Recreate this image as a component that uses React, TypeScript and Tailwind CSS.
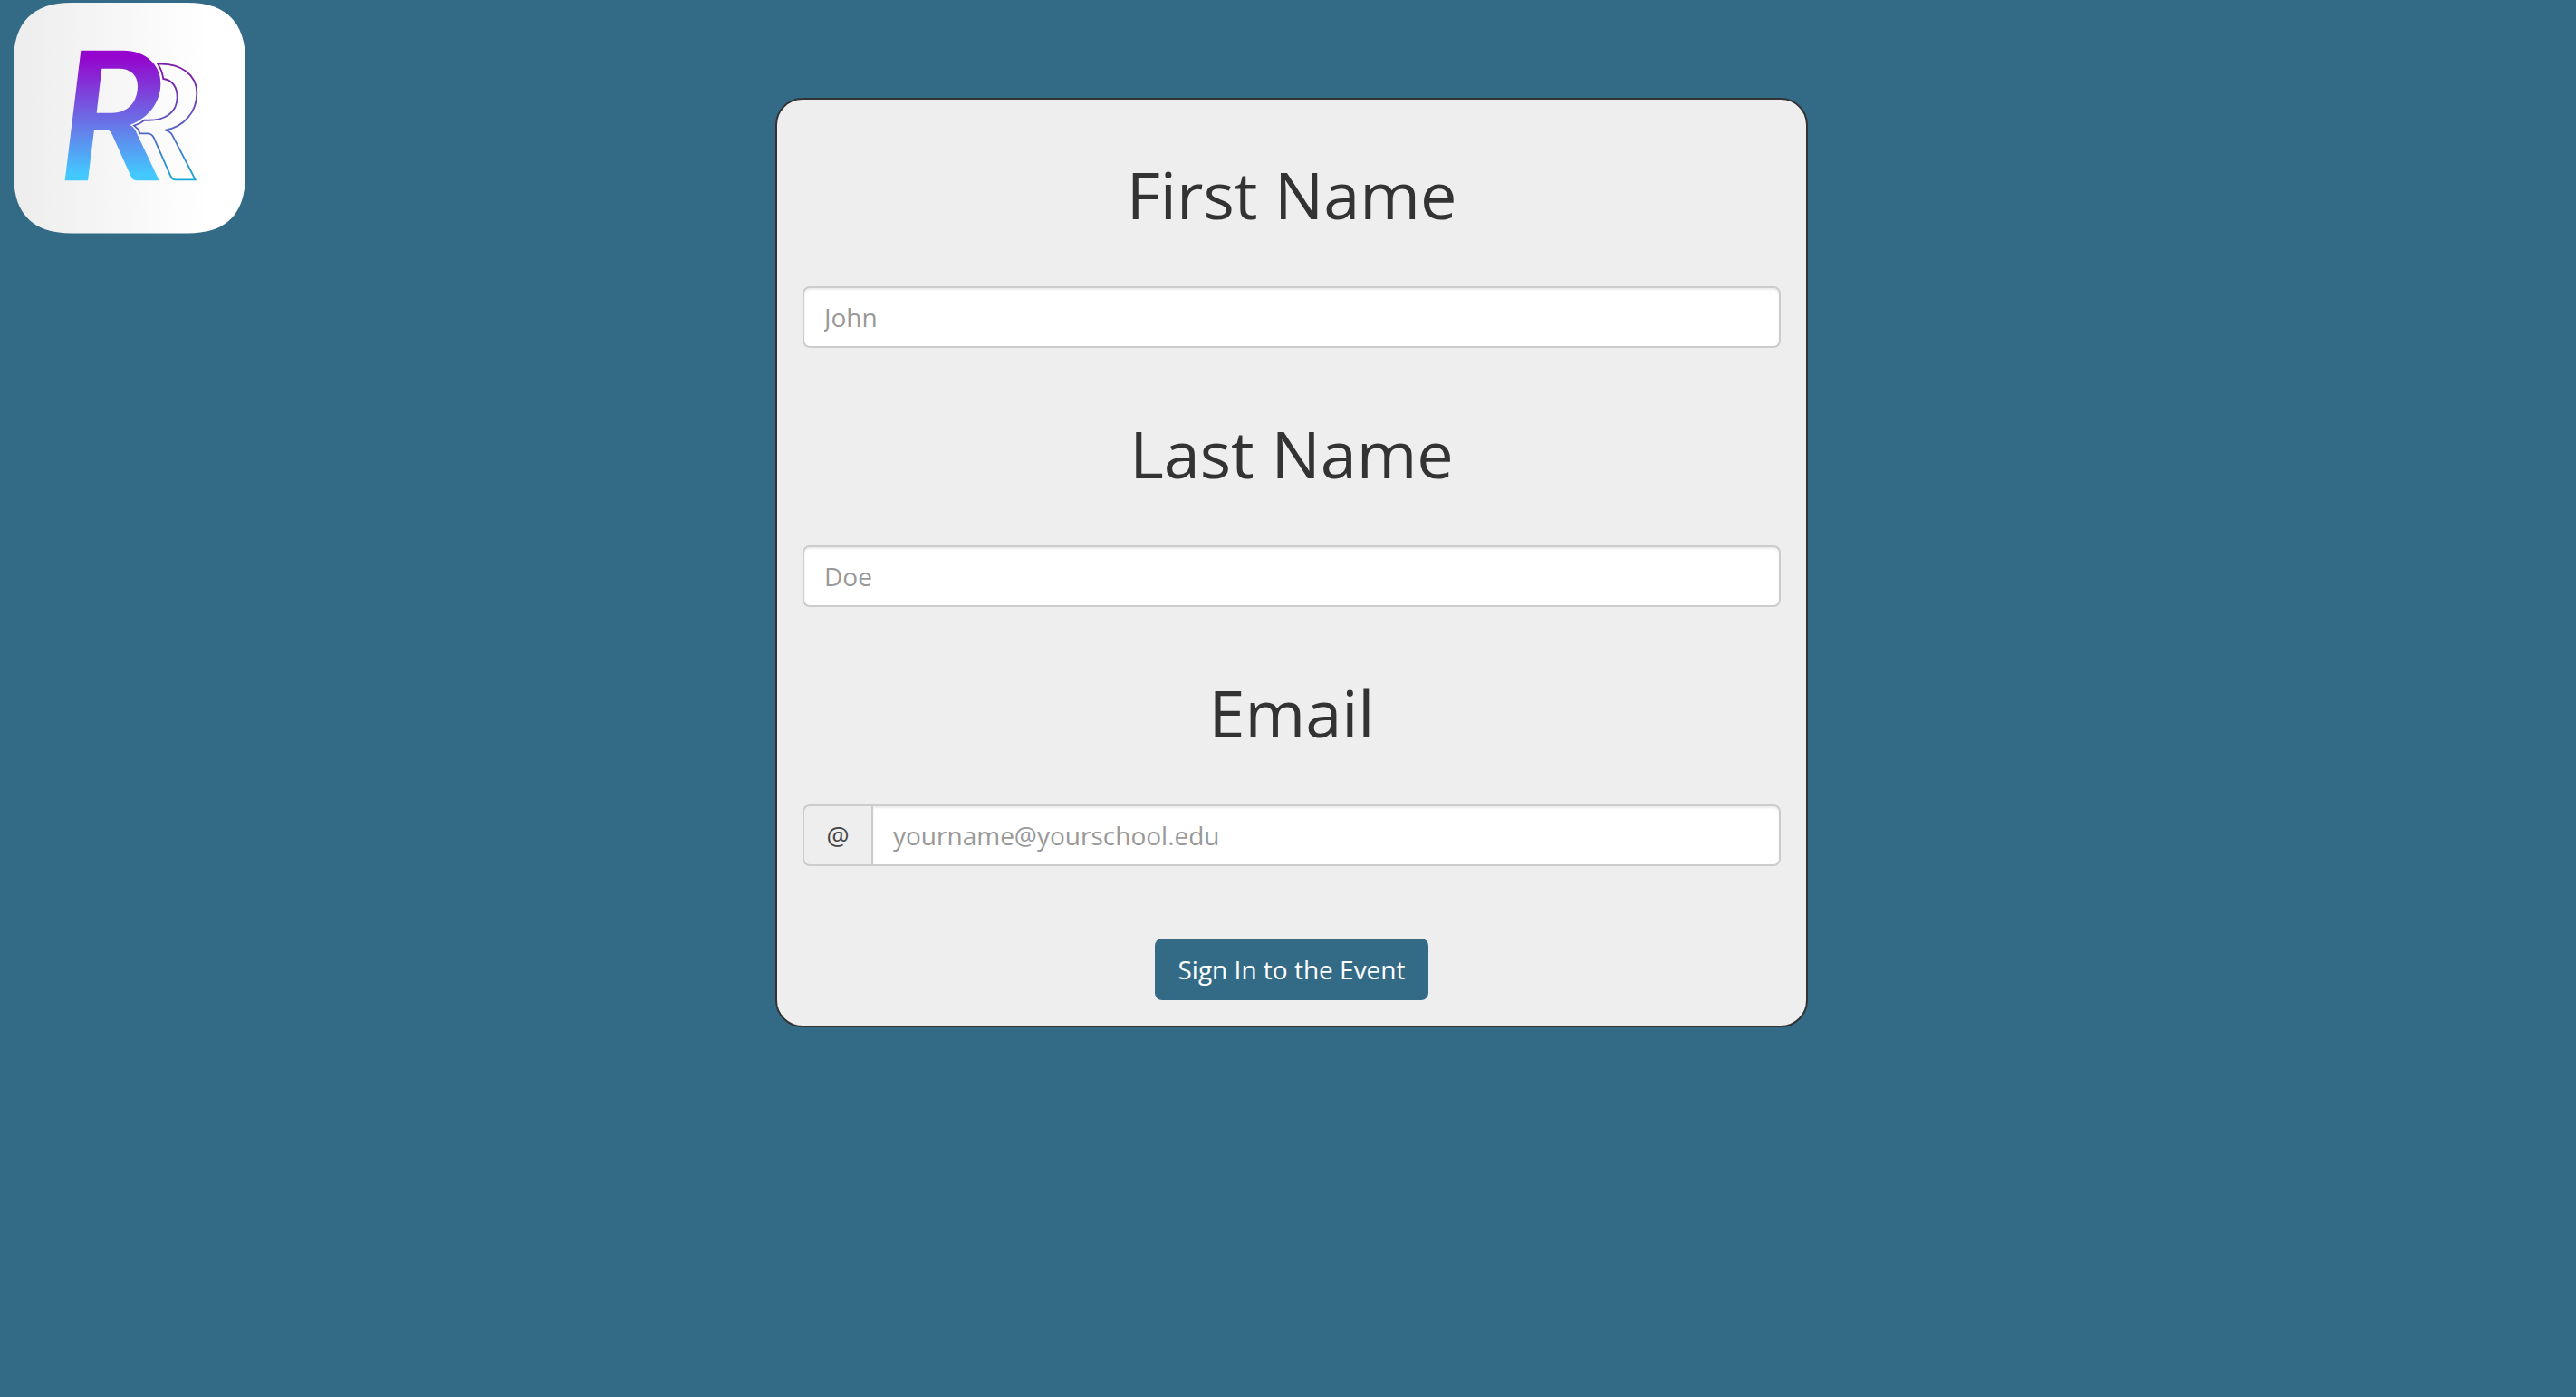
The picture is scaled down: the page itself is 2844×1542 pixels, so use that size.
import type { ReactNode } from "react";

function Logo() {
  return (
    <svg viewBox="8 0 272 260" className="w-[272px] h-[260px]" role="img" aria-label="RR logo">
      <defs>
        <linearGradient id="tile" x1="0" y1="0" x2="1" y2="0">
          <stop offset="0" stopColor="#ededed" />
          <stop offset="0.85" stopColor="#ffffff" />
        </linearGradient>
        <linearGradient id="solid" x1="0" y1="47" x2="0" y2="478" gradientUnits="userSpaceOnUse">
          <stop offset="0.05" stopColor="#9505cd" />
          <stop offset="0.55" stopColor="#6a72e6" />
          <stop offset="0.95" stopColor="#43c8ff" />
        </linearGradient>
        <linearGradient id="line" x1="0" y1="91" x2="0" y2="475" gradientUnits="userSpaceOnUse">
          <stop offset="0.1" stopColor="#7c1cab" />
          <stop offset="0.55" stopColor="#5a62c4" />
          <stop offset="1" stopColor="#16a8d8" />
        </linearGradient>
      </defs>
      <path
        d="M79 3H207C250 3 271 25 271 67V193C271 236 250 257.500 207 257.500H79C36 257.500 15 236 15 193V67C15 25 36 3 79 3Z"
        fill="url(#tile)"
      />
      <g transform="translate(60 40) scale(0.33333)">
        <path
          fillRule="evenodd"
          fill="url(#solid)"
          d="M88 47H228C302 47 352 94 352 155C352 220 312 270 250 294Q262 299 269 313L347 478H273Q261 478 254 465L191 325Q184 309 168 309H132L111 478H35ZM157 107H213C253 107 276 129 276 165C276 218 243 254 192 254H140Z"
        />
        <path
          fill="none"
          stroke="url(#line)"
          strokeWidth="5.500"
          d="M343 92C420 88 472 128 472 188C472 252 428 301 367 311Q383 314 391 328L467 475H402Q391 475 386 465L330 337Q323 322 308 322H284L277 308L264 296L284 288L298 278C368 282 407 252 407 202C407 167 389 144 361 141C358 120 353 107 343 92Z"
        />
      </g>
    </svg>
  );
}

function Field({ id, label, children }: { id: string; label: string; children: ReactNode }) {
  return (
    <div className="flex flex-col gap-[62px]">
      <label htmlFor={id} className="text-center text-7xl leading-[80px]">
        {label}
      </label>
      {children}
    </div>
  );
}

const inputStyle =
  "h-[68px] w-full min-w-0 border-2 border-[#ccc] bg-white px-[22px] text-[28px] text-[#555] shadow-[inset_0_2px_2px_rgba(0,0,0,0.075)] outline-none placeholder:text-[#999]";

export default function App() {
  return (
    <div className="grid min-h-screen grid-cols-[1fr_minmax(0,1140px)_1fr] items-start bg-[#336b87] pl-2 font-['Open_Sans',sans-serif] text-[#333]">
      <Logo />
      <form
        className="mt-[108px] flex flex-col gap-20 rounded-[30px] border-2 border-[#333] bg-[#eee] px-7 pt-16 pb-7"
        onSubmit={(e) => e.preventDefault()}
      >
        <div className="flex flex-col gap-[76px]">
          <Field id="first" label="First Name">
            <input id="first" type="text" placeholder="John" className={`${inputStyle} rounded-lg`} />
          </Field>
          <Field id="last" label="Last Name">
            <input id="last" type="text" placeholder="Doe" className={`${inputStyle} rounded-lg`} />
          </Field>
          <Field id="email" label="Email">
            <div className="flex">
              <span className="flex w-[76px] shrink-0 items-center justify-center rounded-l-lg border-2 border-r-0 border-[#ccc] bg-[#eee] text-[28px] text-[#444]">
                @
              </span>
              <input
                id="email"
                type="email"
                placeholder="yourname@yourschool.edu"
                className={`${inputStyle} rounded-r-lg`}
              />
            </div>
          </Field>
        </div>
        <button
          type="submit"
          className="h-[68px] self-center rounded-lg bg-[#336b87] px-[25px] text-[28px] text-white"
        >
          Sign In to the Event
        </button>
      </form>
    </div>
  );
}
